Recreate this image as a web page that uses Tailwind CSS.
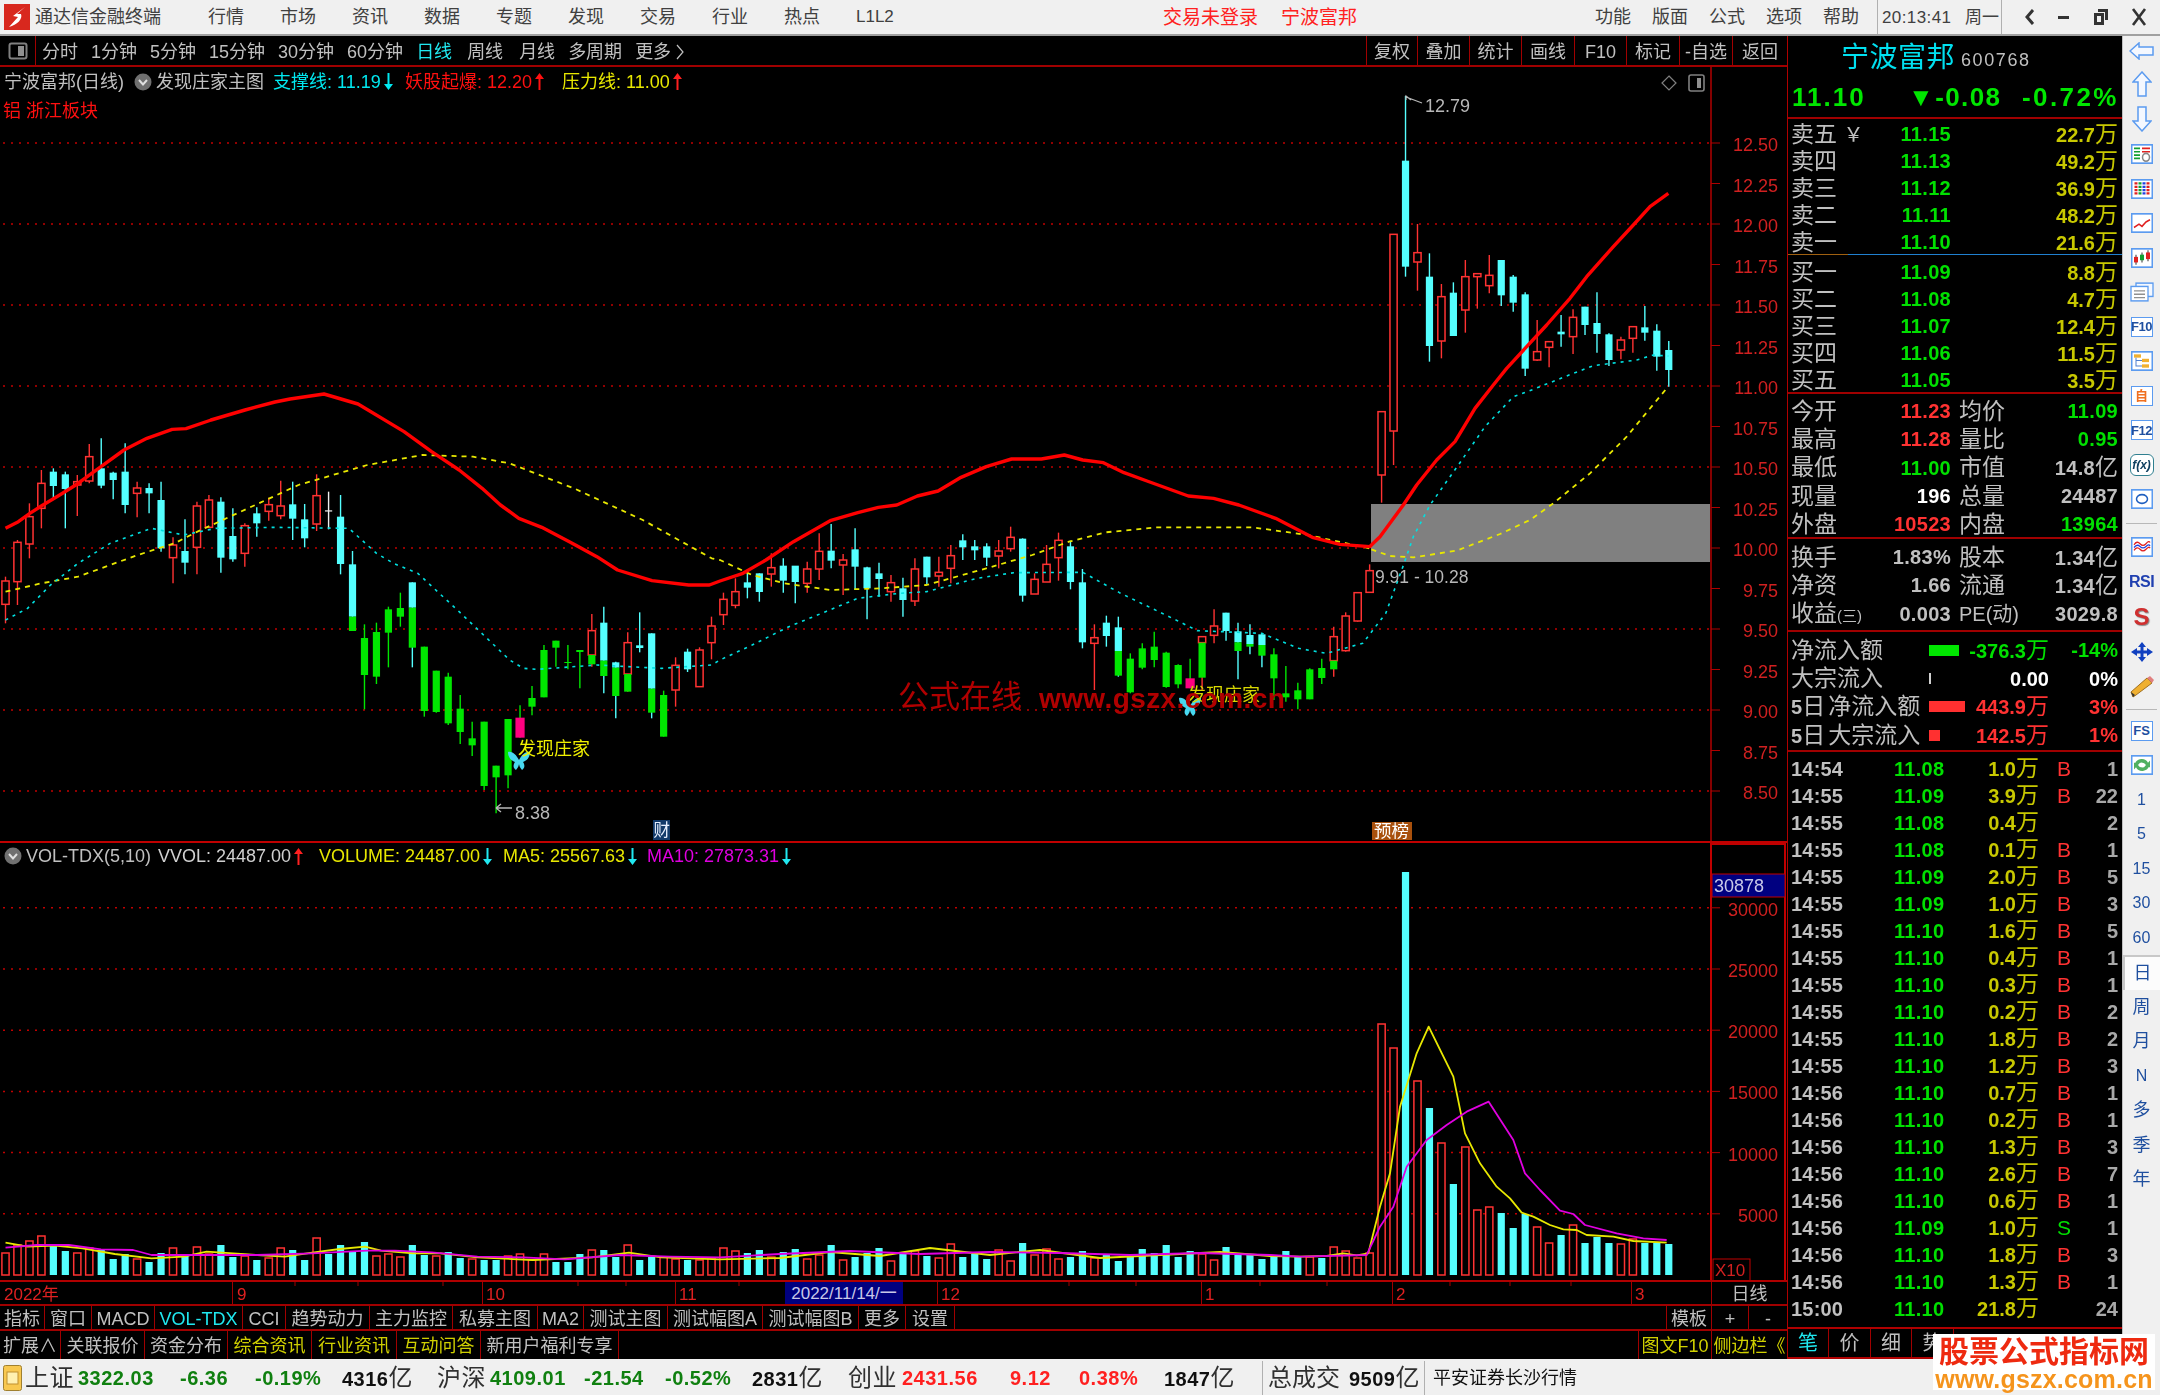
<!DOCTYPE html>
<html lang="zh-CN">
<head>
  <meta charset="UTF-8">
  <title>通达信金融终端</title>
  <script src="https://cdn.jsdelivr.net/npm/@tailwindcss/browser@4"></script>
</head>
<body class="bg-black">
<svg width="0" height="0" class="absolute">
  <defs>
    <path id="up" d="M4.5 0 L9 6 H5.5 V17 H3.5 V6 H0 Z" fill="currentColor"/>
    <path id="down" d="M4.5 17 L9 11 H5.5 V0 H3.5 V11 H0 Z" fill="currentColor"/>
    <path id="fly" d="M-11 -8 C-6 -9 -3 -5 0 0 C3 -5 6 -9 11 -8 C11 -2 7 1 4 2 C6 5 6 8 3 10 C1 8 0 5 0 4 C0 5 -1 8 -3 10 C-6 8 -6 5 -4 2 C-7 1 -11 -2 -11 -8 Z"/>
  </defs>
</svg>
<div class="relative w-[2160px] h-[1395px] flex flex-col overflow-hidden blur-[0.35px] font-['Liberation_Sans','Noto_Sans_CJK_SC',sans-serif] text-[18px] leading-none text-[#c0c0c0]">

  <!-- Title bar -->
  <div class="h-[36px] shrink-0 bg-[#f0f0f0] border-b-2 border-[#a0a0a0] flex items-center text-[#404040]">
    <svg width="26" height="26" viewBox="0 0 26 26" class="ml-[4px] shrink-0"><rect width="26" height="26" fill="#d8281e"/><path d="M21 3 L9 12 L14 13 L5 23 C13 21 19 15 17 10 L13 10 Z" fill="#fff"/></svg>
    <span class="ml-[5px] w-[173px]">通达信金融终端</span>
    <div class="flex gap-[36px]"><span>行情</span><span>市场</span><span>资讯</span><span>数据</span><span>专题</span><span>发现</span><span>交易</span><span>行业</span><span>热点</span><span class="w-[37px] text-[17px]">L1L2</span></div>
    <span class="ml-[270px] text-[19px] text-[#ff2020] w-[118px]">交易未登录</span>
    <span class="text-[19px] text-[#ff2020]">宁波富邦</span>
    <div class="ml-[238px] flex gap-[21px]"><span>功能</span><span>版面</span><span>公式</span><span>选项</span><span>帮助</span></div>
    <div class="ml-[18px] w-[125px] h-[34px] border-x border-[#b0b0b0] flex items-center pl-[4px] text-[17px]"><span class="w-[83px] tracking-[0.4px]">20:13:41</span><span>周一</span></div>
    <div class="flex-1 flex items-center justify-around pl-[10px] pr-[2px]">
      <svg width="14" height="20" viewBox="0 0 14 20"><path d="M10 3 L4 10 L10 17" fill="none" stroke="#333" stroke-width="3"/></svg>
      <svg width="14" height="20" viewBox="0 0 14 20"><rect x="1" y="9" width="11" height="3" fill="#333"/></svg>
      <svg width="18" height="20" viewBox="0 0 18 20"><path d="M6 2 H16 V13 H13 V5 H6 Z M2 6 H12 V18 H2 Z M5 9 V15 H9 V9 Z" fill="#333" fill-rule="evenodd"/></svg>
      <svg width="16" height="20" viewBox="0 0 16 20"><path d="M2 2 L14 18 M14 2 L2 18" stroke="#333" stroke-width="2.6"/></svg>
    </div>
  </div>

  <!-- Main area -->
  <div class="h-[1323px] shrink-0 flex">

    <!-- Left: chart column -->
    <div class="w-[1788px] shrink-0 flex flex-col border-r border-[#b00000]">

      <!-- Period toolbar -->
      <div class="h-[31px] shrink-0 flex items-center border-b-2 border-[#a00000]">
        <div class="w-[36px] h-full flex items-center justify-center border-r border-[#a00000]">
          <svg width="20" height="18" viewBox="0 0 20 18"><rect x="1.5" y="1.5" width="17" height="15" rx="2" fill="none" stroke="#808080" stroke-width="2"/><rect x="10" y="4" width="6" height="10" fill="#909090"/></svg>
        </div>
        <div class="ml-[6px] pt-[2px] flex items-center gap-[13px]"><span>分时</span><span>1分钟</span><span>5分钟</span><span>15分钟</span><span>30分钟</span><span>60分钟</span><span class="text-[#20e8f0]">日线</span><span class="ml-[2px]">周线</span><span class="ml-[3px]">月线</span><span>多周期</span><span class="flex items-center gap-[5px]">更多<svg width="8" height="16" viewBox="0 0 8 16"><path d="M1 1 L7 8 L1 15" fill="none" stroke="#c0c0c0" stroke-width="1.2"/></svg></span></div>
        <div class="ml-auto flex h-full">
          <span class="w-[51px] pt-[2px] flex items-center justify-center border-l border-[#a00000]">复权</span>
          <span class="w-[52px] pt-[2px] flex items-center justify-center border-l border-[#a00000]">叠加</span>
          <span class="w-[52px] pt-[2px] flex items-center justify-center border-l border-[#a00000]">统计</span>
          <span class="w-[53px] pt-[2px] flex items-center justify-center border-l border-[#a00000]">画线</span>
          <span class="w-[52px] pt-[2px] flex items-center justify-center border-l border-[#a00000]">F10</span>
          <span class="w-[53px] pt-[2px] flex items-center justify-center border-l border-[#a00000]">标记</span>
          <span class="w-[53px] pt-[2px] flex items-center justify-center border-l border-[#a00000]">-自选</span>
          <span class="w-[55px] pt-[2px] flex items-center justify-center border-l border-[#a00000]">返回</span>
        </div>
      </div>

      <!-- Price chart -->
      <div class="relative h-[776px] shrink-0 border-b-2 border-[#c00000]">
        <svg id="price" class="absolute left-0 top-0" width="1787" height="774" viewBox="0 67 1787 774">
          <g id="pGrid"></g>
          <rect x="1371" y="504" width="339" height="58" fill="#808080"/>
          <g id="pBars"></g>
          <g id="pLines"></g>
          <line x1="1711" y1="67" x2="1711" y2="841" stroke="#b00000" stroke-width="1.5"/>
          <g id="pAxis" fill="#d02020" font-size="18"></g>
          <g fill="#b8b8b8" font-size="18">
            <path d="M1406 100 V96 L1411 100 M1406 97 L1422 103" fill="none" stroke="#b8b8b8" stroke-width="1.2"/>
            <text x="1425" y="112">12.79</text>
            <path d="M496 808 L501 804 M496 808 L501 812 M496 808 H512" fill="none" stroke="#b8b8b8" stroke-width="1.4"/>
            <text x="515" y="819">8.38</text>
            <text x="1375" y="583" font-size="17.5">9.91 - 10.28</text>
          </g>
          <use href="#fly" fill="#48d8f0" x="519" y="760"/>
          <use href="#fly" fill="#48d8f0" x="1190" y="706"/>
          <text x="518" y="755" fill="#f0f000" font-size="18">发现庄家</text>
          <text x="1188" y="701" fill="#d8d800" font-size="18">发现庄家</text>
          <text x="898" y="707" fill="#b00000" font-size="31">公式在线</text>
          <text x="1039" y="708" fill="#b00000" font-size="28" font-weight="bold" letter-spacing="0.4">www.gszx.com.cn</text>
          <rect x="653" y="820" width="17" height="20" fill="#123a6a"/>
          <text x="653.5" y="836" fill="#e8f0ff" font-size="16.5">财</text>
          <rect x="1372" y="822" width="40" height="18" fill="#a8500c"/>
          <text x="1374" y="837" fill="#fff" font-size="17.5">预榜</text>
          <path d="M1669 76 L1676 83 L1669 90 L1662 83 Z" fill="none" stroke="#808080" stroke-width="1.2"/>
          <rect x="1689" y="75" width="15" height="16" rx="2" fill="none" stroke="#808080" stroke-width="1.6"/>
          <rect x="1697" y="78" width="4" height="10" fill="#909090"/>
        </svg>
        <div class="absolute left-0 top-0 w-[1700px]">
          <div class="h-[29px] flex items-center pl-[4px]">
            <span class="w-[130px]">宁波富邦(日线)</span>
            <span class="w-[22px]"><svg width="18" height="18" viewBox="0 0 18 18"><circle cx="9" cy="9" r="8.5" fill="#707070"/><path d="M5 7 L9 11.5 L13 7" fill="none" stroke="#e0e0e0" stroke-width="2"/></svg></span>
            <span class="w-[117px]">发现庄家主图</span>
            <span class="w-[132px] text-[#00e8f0] flex items-center">支撑线: 11.19<svg width="9" height="17" viewBox="0 0 9 17" class="ml-[3px]"><use href="#down"/></svg></span>
            <span class="w-[157px] text-[#ff1010] flex items-center">妖股起爆: 12.20<svg width="9" height="17" viewBox="0 0 9 17" class="ml-[3px]"><use href="#up"/></svg></span>
            <span class="text-[#e8e800] flex items-center">压力线: 11.00<svg width="9" height="17" viewBox="0 0 9 17" class="ml-[3px] text-[#ff2020]"><use href="#up"/></svg></span>
          </div>
          <div class="pl-[3px] mt-[6px] text-[#ff1010]">铝 浙江板块</div>
        </div>
      </div>

      <!-- Volume chart -->
      <div class="relative h-[439px] shrink-0 border-b-2 border-[#b00000]">
        <svg class="absolute left-0 top-0" width="1787" height="437" viewBox="0 843 1787 437">
          <g id="vGrid"></g>
          <g id="vBars"></g>
          <g id="vLines"></g>
          <path d="M1711 843 V1281 M1785 843 V1281 M1711 844 H1785" fill="none" stroke="#c00000" stroke-width="2"/>
          <rect x="1712" y="874" width="73" height="23" fill="#000080" stroke="#c00000"/>
          <text x="1714" y="892" fill="#c8c8e8" font-size="18">30878</text>
          <g id="vAxis" fill="#d02020" font-size="18"></g>
          <rect x="1713" y="1259" width="37" height="22" fill="none" stroke="#c00000"/>
          <text x="1715" y="1276" fill="#d02020" font-size="17">X10</text>
        </svg>
        <div class="absolute left-0 top-0 h-[26px] flex items-center pl-[4px]">
          <span class="w-[22px]"><svg width="18" height="18" viewBox="0 0 18 18"><circle cx="9" cy="9" r="8.5" fill="#707070"/><path d="M5 7 L9 11.5 L13 7" fill="none" stroke="#e0e0e0" stroke-width="2"/></svg></span>
          <span class="w-[132px]">VOL-TDX(5,10)</span>
          <span class="w-[161px] text-[#d0d0d0] flex items-center">VVOL: 24487.00<svg width="9" height="17" viewBox="0 0 9 17" class="ml-[3px] text-[#ff2020]"><use href="#up"/></svg></span>
          <span class="w-[184px] text-[#e8e800] flex items-center">VOLUME: 24487.00<svg width="9" height="17" viewBox="0 0 9 17" class="ml-[3px] text-[#20e8f0]"><use href="#down"/></svg></span>
          <span class="w-[144px] text-[#e8e800] flex items-center">MA5: 25567.63<svg width="9" height="17" viewBox="0 0 9 17" class="ml-[3px] text-[#20e8f0]"><use href="#down"/></svg></span>
          <span class="text-[#e000e0] flex items-center">MA10: 27873.31<svg width="9" height="17" viewBox="0 0 9 17" class="ml-[3px] text-[#20e8f0]"><use href="#down"/></svg></span>
        </div>
      </div>

      <!-- Date axis -->
      <div class="relative h-[24px] shrink-0 flex text-[#e02020] text-[17px] border-b-2 border-[#a00000]">
        <span class="w-[232px] pl-[4px] pt-[2px] flex items-center">2022年</span>
        <span class="w-[250px] pl-[4px] pt-[2px] flex items-center border-l border-[#a00000]">9</span>
        <span class="w-[193px] pl-[3px] pt-[2px] flex items-center border-l border-[#a00000]">10</span>
        <span class="w-[262px] pl-[3px] pt-[2px] flex items-center border-l border-[#a00000]">11</span>
        <span class="w-[264px] pl-[3px] pt-[2px] flex items-center border-l border-[#a00000]">12</span>
        <span class="w-[191px] pl-[3px] pt-[2px] flex items-center border-l border-[#a00000]">1</span>
        <span class="w-[239px] pl-[3px] pt-[2px] flex items-center border-l border-[#a00000]">2</span>
        <span class="w-[80px] pl-[3px] pt-[2px] flex items-center border-l border-[#a00000]">3</span>
        <span class="flex-1 pt-[2px] flex items-center justify-center border-l border-[#a00000] text-[#c0c0c0] text-[18px]">日线</span>
        <span class="absolute left-[785px] top-0 w-[118px] h-[22px] pt-[1px] bg-[#000080] flex items-center justify-center text-[#c8c8e8]">2022/11/14/一</span>
        <svg class="absolute left-0 top-0" width="1711" height="4"><path d="M295 0V4 M358 0V4 M443 0V4 M578 0V4 M626 0V4 M739 0V4 M1069 0V4 M1136 0V4 M1260 0V4 M1327 0V4 M1450 0V4 M1510 0V4 M1571 0V4" stroke="#a00000"/></svg>
      </div>

      <!-- Indicator tabs -->
      <div class="h-[25px] shrink-0 flex items-stretch border-b-2 border-[#a00000]">
        <span class="w-[45px] pt-[2px] flex items-center justify-center border-r border-[#a00000]">指标</span>
        <span class="w-[47px] pt-[2px] flex items-center justify-center border-r border-[#a00000]">窗口</span>
        <span class="w-[63px] pt-[2px] flex items-center justify-center border-r border-[#a00000]">MACD</span>
        <span class="w-[88px] pt-[2px] flex items-center justify-center border-r border-[#a00000] text-[#20e8f0]">VOL-TDX</span>
        <span class="w-[43px] pt-[2px] flex items-center justify-center border-r border-[#a00000]">CCI</span>
        <span class="w-[84px] pt-[2px] flex items-center justify-center border-r border-[#a00000]">趋势动力</span>
        <span class="w-[83px] pt-[2px] flex items-center justify-center border-r border-[#a00000]">主力监控</span>
        <span class="w-[85px] pt-[2px] flex items-center justify-center border-r border-[#a00000]">私募主图</span>
        <span class="w-[46px] pt-[2px] flex items-center justify-center border-r border-[#a00000]">MA2</span>
        <span class="w-[84px] pt-[2px] flex items-center justify-center border-r border-[#a00000]">测试主图</span>
        <span class="w-[95px] pt-[2px] flex items-center justify-center border-r border-[#a00000]">测试幅图A</span>
        <span class="w-[96px] pt-[2px] flex items-center justify-center border-r border-[#a00000]">测试幅图B</span>
        <span class="w-[47px] pt-[2px] flex items-center justify-center border-r border-[#a00000]">更多</span>
        <span class="w-[49px] pt-[2px] flex items-center justify-center border-r border-[#a00000]">设置</span>
        <span class="ml-auto w-[45px] pt-[2px] flex items-center justify-center border-l border-[#a00000]">模板</span>
        <span class="w-[37px] pt-[2px] flex items-center justify-center border-l border-[#a00000]">+</span>
        <span class="w-[39px] pt-[2px] flex items-center justify-center border-l border-[#a00000]">-</span>
      </div>

      <!-- Info tabs -->
      <div class="flex-1 flex items-stretch">
        <span class="w-[61px] pt-[2px] flex items-center justify-center border-r border-[#a00000]">扩展∧</span>
        <span class="w-[84px] pt-[2px] flex items-center justify-center border-r border-[#a00000]">关联报价</span>
        <span class="w-[83px] pt-[2px] flex items-center justify-center border-r border-[#a00000]">资金分布</span>
        <span class="w-[84px] pt-[2px] flex items-center justify-center border-r border-[#a00000] text-[#d0d000]">综合资讯</span>
        <span class="w-[85px] pt-[2px] flex items-center justify-center border-r border-[#a00000] text-[#d0d000]">行业资讯</span>
        <span class="w-[84px] pt-[2px] flex items-center justify-center border-r border-[#a00000] text-[#d0d000]">互动问答</span>
        <span class="w-[138px] pt-[2px] flex items-center justify-center border-r border-[#a00000]">新用户福利专享</span>
        <span class="ml-auto w-[73px] pt-[2px] flex items-center justify-center border-l border-[#a00000] text-[#d0d000]">图文F10</span>
        <span class="w-[76px] pt-[2px] flex items-center justify-center border-l border-[#a00000] text-[#d0d000]">侧边栏《</span>
      </div>
    </div>

    <!-- Quote panel -->
    <div class="w-[334px] shrink-0 flex flex-col">
      <div class="h-[83px] shrink-0 border-b-2 border-[#a00000] relative">
        <div class="h-[38px] flex items-center pl-[53px]">
          <span class="text-[28px] text-[#00e0f0] font-['Noto_Sans_CJK_SC'] w-[120px] tracking-[0.5px]">宁波富邦</span>
          <span class="text-[18px] tracking-[1.6px] mt-[10px]">600768</span>
        </div>
        <div class="flex items-center pl-[4px] text-[#00e600] font-bold text-[26px] tracking-[2px] mt-[10px]">
          <span class="w-[116px]">11.10</span>
          <span class="w-[114px] tracking-[1.4px]">▼-0.08</span>
          <span class="tracking-[2.4px]">-0.72%</span>
        </div>
      </div>
      <div id="asks" class="h-[135px] pt-[1.5px] shrink-0"></div>
      <div class="h-[1px] shrink-0 bg-[linear-gradient(to_right,#a06010_60px,#2080d0_60px)]"></div>
      <div id="bids" class="h-[139px] pt-[3.5px] shrink-0 border-b-2 border-[#a00000]"></div>
      <div id="stats" class="h-[145px] shrink-0 pt-[3px] border-b-2 border-[#a00000]"></div>
      <div id="stats2" class="h-[93px] shrink-0 pt-[4px] border-b-2 border-[#a00000]"></div>
      <div class="h-[120px] shrink-0 pt-[4px] border-b-2 border-[#a00000] text-[20px] font-bold">
        <div class="h-[28.4px] flex items-center pl-[3px] pr-[4px]"><span class="w-[138px] text-[23px] font-normal text-[#c0c0c0]">净流入额</span><span class="w-[30px] h-[11px] bg-[#00e600]"></span><span class="w-[90px] text-right text-[#00e000]">-376.3<span class="text-[23px] font-normal">万</span></span><span class="flex-1 text-right text-[#00e000]">-14%</span></div>
        <div class="h-[28.4px] flex items-center pl-[3px] pr-[4px]"><span class="w-[138px] text-[23px] font-normal text-[#c0c0c0]">大宗流入</span><span class="w-[30px] h-[11px] flex"><span class="w-[1.5px] bg-[#d0d0d0]"></span></span><span class="w-[90px] text-right text-white">0.00</span><span class="flex-1 text-right text-white">0%</span></div>
        <div class="h-[28.4px] flex items-center pl-[3px] pr-[4px]"><span class="w-[138px] text-[#c0c0c0] whitespace-nowrap"><span class="font-normal text-[23px]"><span class="font-bold text-[20px]">5</span>日</span><span class="ml-[3px] text-[23px] font-normal">净流入额</span></span><span class="w-[30px] flex"><span class="w-[36px] shrink-0 h-[11px] bg-[#ff3030]"></span></span><span class="w-[90px] text-right text-[#ff3232]">443.9<span class="text-[23px] font-normal">万</span></span><span class="flex-1 text-right text-[#ff3232]">3%</span></div>
        <div class="h-[28.4px] flex items-center pl-[3px] pr-[4px]"><span class="w-[138px] text-[#c0c0c0] whitespace-nowrap"><span class="font-normal text-[23px]"><span class="font-bold text-[20px]">5</span>日</span><span class="ml-[3px] text-[23px] font-normal">大宗流入</span></span><span class="w-[30px] flex"><span class="w-[11px] h-[11px] bg-[#ff3030]"></span></span><span class="w-[90px] text-right text-[#ff3232]">142.5<span class="text-[23px] font-normal">万</span></span><span class="flex-1 text-right text-[#ff3232]">1%</span></div>
      </div>
      <div id="trades" class="h-[577px] shrink-0 pt-[3px] border-b-2 border-[#b00000] text-[20px] font-bold"></div>
      <div class="flex-1 flex items-stretch border-b-2 border-[#b00000]">
        <span class="w-[41px] flex items-center justify-center border-r border-[#a00000] text-[20px] text-[#20e8f0]">笔</span>
        <span class="w-[42px] flex items-center justify-center border-r border-[#a00000] text-[20px]">价</span>
        <span class="w-[41px] flex items-center justify-center border-r border-[#a00000] text-[20px]">细</span>
        <span class="w-[42px] flex items-center justify-center border-r border-[#a00000] text-[20px]">势</span>
      </div>
    </div>

    <!-- Side toolbar -->
    <div class="flex-1 bg-[#f0f0f0] border-l border-[#c0c0c0] flex flex-col items-stretch text-[#1f4f9f]">
      <div class="h-[30px] flex items-center justify-center"><svg width="26" height="18" viewBox="0 0 26 18"><path d="M1 9 L10 1 V5 H24 V13 H10 V17 Z" fill="#f4f8ff" stroke="#5b9bf0" stroke-width="1.5"/></svg></div>
      <div class="h-[35px] flex items-center justify-center"><svg width="20" height="26" viewBox="0 0 20 26"><path d="M10 1 L19 11 H14 V25 H6 V11 H1 Z" fill="#f4f8ff" stroke="#5b9bf0" stroke-width="1.5"/></svg></div>
      <div class="h-[36px] flex items-center justify-center"><svg width="20" height="26" viewBox="0 0 20 26"><path d="M10 25 L19 15 H14 V1 H6 V15 H1 Z" fill="#f4f8ff" stroke="#5b9bf0" stroke-width="1.5"/></svg></div>
      <div class="h-[34.5px] flex items-center justify-center"><svg width="22" height="20" viewBox="0 0 22 18" preserveAspectRatio="none"><rect x=".75" y=".75" width="20.5" height="16.5" fill="#fff" stroke="#5b9bf0" stroke-width="1.5"/><path d="M3 4 H9 M3 7 H9 M3 10 H9 M3 13 H9" stroke="#10a030" stroke-width="1.5"/><path d="M11 4 H19 M11 7 H19" stroke="#e02020" stroke-width="1.5"/><circle cx="15" cy="12" r="3.5" fill="none" stroke="#888" stroke-width="1.5"/></svg></div>
      <div class="h-[34.5px] flex items-center justify-center"><svg width="22" height="20" viewBox="0 0 22 18" preserveAspectRatio="none"><rect x=".75" y=".75" width="20.5" height="16.5" fill="#fff" stroke="#5b9bf0" stroke-width="1.5"/><path d="M5 3 V15" stroke="#e02020" stroke-width="3" stroke-dasharray="2 1"/><path d="M9 3 V15" stroke="#10a030" stroke-width="3" stroke-dasharray="2 1"/><path d="M13 3 V15" stroke="#2040e0" stroke-width="3" stroke-dasharray="2 1"/><path d="M17 3 V15" stroke="#e02020" stroke-width="3" stroke-dasharray="2 1"/></svg></div>
      <div class="h-[34.5px] flex items-center justify-center"><svg width="22" height="20" viewBox="0 0 22 18" preserveAspectRatio="none"><rect x=".75" y=".75" width="20.5" height="16.5" fill="#fff" stroke="#5b9bf0" stroke-width="1.5"/><path d="M3 13 L8 10 L11 12 L15 8 L19 6" fill="none" stroke="#e02020" stroke-width="1.5"/></svg></div>
      <div class="h-[34.5px] flex items-center justify-center"><svg width="22" height="20" viewBox="0 0 22 18" preserveAspectRatio="none"><rect x=".75" y=".75" width="20.5" height="16.5" fill="#fff" stroke="#5b9bf0" stroke-width="1.5"/><path d="M5 6 V15 M11 4 V13 M17 2 V12" stroke="#333" stroke-width="1"/><rect x="3" y="8" width="4" height="5" fill="#e02020"/><rect x="9" y="6" width="4" height="5" fill="#10a030"/><rect x="15" y="4" width="4" height="6" fill="#e02020"/></svg></div>
      <div class="h-[34.5px] flex items-center justify-center"><svg width="24" height="20" viewBox="0 0 24 18" preserveAspectRatio="none"><rect x="6" y="1" width="17" height="12" fill="#f4f8ff" stroke="#5b9bf0" stroke-width="1.3"/><rect x="1" y="4" width="17" height="13" fill="#fff" stroke="#5b9bf0" stroke-width="1.3"/><path d="M4 8 H15 M4 11 H15 M4 14 H15" stroke="#909090" stroke-width="1.2"/></svg></div>
      <div class="h-[34.5px] flex items-center justify-center"><span class="w-[22px] h-[20px] bg-white border-[1.5px] border-[#5b9bf0] flex items-center justify-center text-[13px] tracking-[-0.5px] text-[#1f4f9f] font-bold">F10</span></div>
      <div class="h-[34.5px] flex items-center justify-center"><svg width="22" height="20" viewBox="0 0 22 18" preserveAspectRatio="none"><rect x=".75" y=".75" width="20.5" height="16.5" fill="#fff" stroke="#5b9bf0" stroke-width="1.5"/><rect x="3" y="3" width="7" height="3" fill="#f0b030"/><rect x="11" y="7" width="7" height="3" fill="#f0b030"/><rect x="11" y="12" width="7" height="3" fill="#f0b030"/><path d="M5 6 V13.5 H11 M5 8.5 H11" fill="none" stroke="#5080d0"/></svg></div>
      <div class="h-[34.5px] flex items-center justify-center"><span class="w-[22px] h-[20px] bg-white border-[1.5px] border-[#5b9bf0] flex items-center justify-center text-[13px] text-[#f07020] font-bold">自</span></div>
      <div class="h-[34.5px] flex items-center justify-center"><span class="w-[22px] h-[20px] bg-white border-[1.5px] border-[#5b9bf0] flex items-center justify-center text-[13px] tracking-[-0.5px] text-[#1f4f9f] font-bold">F12</span></div>
      <div class="h-[34.5px] flex items-center justify-center"><span class="w-[24px] h-[22px] bg-white border-[1.5px] border-[#308090] rounded-[6px] flex items-center justify-center text-[12px] italic text-[#104060] font-bold">f(x)</span></div>
      <div class="h-[34.5px] flex items-center justify-center"><svg width="22" height="20" viewBox="0 0 22 18" preserveAspectRatio="none"><rect x=".75" y=".75" width="20.5" height="16.5" fill="#fff" stroke="#5b9bf0" stroke-width="1.5"/><ellipse cx="11" cy="9" rx="5.5" ry="4" fill="none" stroke="#2060c0" stroke-width="1.5"/></svg></div>
      <div class="h-[13px] flex items-center px-[3px]"><div class="h-[1px] w-full bg-[#b8b8b8]"></div></div>
      <div class="h-[35px] flex items-center justify-center"><svg width="22" height="20" viewBox="0 0 22 18" preserveAspectRatio="none"><rect x=".75" y=".75" width="20.5" height="16.5" fill="#fff" stroke="#5b9bf0" stroke-width="1.5"/><path d="M3 7 Q6 3 9 6 T15 6 T19 5 M3 12 Q6 8 9 11 T15 11 T19 10" fill="none" stroke="#e02020" stroke-width="1.2"/><path d="M3 9.5 Q6 6 9 8.5 T15 8.5 T19 8" fill="none" stroke="#2040e0" stroke-width="1.2"/></svg></div>
      <div class="h-[35px] flex items-center justify-center text-[16px] font-bold text-[#2040b0] tracking-[-0.5px]">RSI</div>
      <div class="h-[35px] flex items-center justify-center text-[24px] font-bold text-[#d03030] [text-shadow:1px_1px_1px_#888]">S</div>
      <div class="h-[35px] flex items-center justify-center"><svg width="22" height="20" viewBox="0 0 22 20"><path d="M11 0 L15 5 H12.5 V8.5 H16 V6 L22 10 L16 14 V11.5 H12.5 V15 H15 L11 20 L7 15 H9.5 V11.5 H6 V14 L0 10 L6 6 V8.5 H9.5 V5 H7 Z" fill="#1040c0"/></svg></div>
      <div class="h-[35px] flex items-center justify-center"><svg width="24" height="22" viewBox="0 0 24 22"><path d="M3 21 L1 16 L17 2 L22 7 L6 19 Z" fill="#f0b030" stroke="#a07020"/><path d="M17 2 L22 7 L24 4 L20 0 Z" fill="#e08080"/><path d="M3 21 L1 16 L5 19 Z" fill="#333"/></svg></div>
      <div class="h-[9px] flex items-center px-[3px]"><div class="h-[1px] w-full bg-[#b8b8b8]"></div></div>
      <div class="h-[34.5px] flex items-center justify-center"><span class="w-[22px] h-[20px] bg-white border-[1.5px] border-[#5b9bf0] flex items-center justify-center text-[13px] text-[#1f4f9f] font-bold">FS</span></div>
      <div class="h-[34.5px] flex items-center justify-center"><svg width="22" height="20" viewBox="0 0 22 18" preserveAspectRatio="none"><rect x=".75" y=".75" width="20.5" height="16.5" fill="#fff" stroke="#5b9bf0" stroke-width="1.5"/><path d="M4 8 A7 6 0 0 1 17 7 L19 5 V11 H13 L15 9 A5 4 0 0 0 6 9 Z M18 10 A7 6 0 0 1 5 11 L3 13 V7 H9 L7 9 A5 4 0 0 0 16 9 Z" fill="#50b060"/></svg></div>
      <div class="h-[34.5px] flex items-center justify-center text-[16px]">1</div>
      <div class="h-[34.5px] flex items-center justify-center text-[16px]">5</div>
      <div class="h-[34.5px] flex items-center justify-center text-[16px]">15</div>
      <div class="h-[34.5px] flex items-center justify-center text-[16px]">30</div>
      <div class="h-[34.5px] flex items-center justify-center text-[16px]">60</div>
      <div class="h-[34.5px] flex items-center justify-center bg-[#fcfcfc] border-t-2 border-l-2 border-[#c8c8c8]">日</div>
      <div class="h-[34.5px] flex items-center justify-center">周</div>
      <div class="h-[34.5px] flex items-center justify-center">月</div>
      <div class="h-[34.5px] flex items-center justify-center text-[16px]">N</div>
      <div class="h-[34.5px] flex items-center justify-center">多</div>
      <div class="h-[34.5px] flex items-center justify-center">季</div>
      <div class="h-[34.5px] flex items-center justify-center">年</div>
    </div>
  </div>

  <!-- Status bar -->
  <div class="flex-1 pt-[2px] bg-[#f0f0f0] flex items-center text-[#101010] text-[20px] tracking-[0.5px]">
    <span class="w-[25px] pl-[3px]"><svg width="19" height="26" viewBox="0 0 19 26"><rect x=".5" y=".5" width="18" height="25" rx="2" fill="#f8c850" stroke="#a08030"/><rect x="4" y="7" width="11" height="12" fill="#fff0b0" stroke="#c09030"/></svg></span>
    <span class="w-[53px] text-[24px] text-[#303030]">上证</span>
    <span class="w-[102px] font-bold text-[#108010]">3322.03</span>
    <span class="w-[75px] font-bold text-[#108010]">-6.36</span>
    <span class="w-[87px] font-bold text-[#108010]">-0.19%</span>
    <span class="w-[95px] font-bold">4316<span class="text-[24px] font-normal text-[#303030]">亿</span></span>
    <span class="w-[53px] text-[24px] text-[#303030]">沪深</span>
    <span class="w-[94px] font-bold text-[#108010]">4109.01</span>
    <span class="w-[81px] font-bold text-[#108010]">-21.54</span>
    <span class="w-[87px] font-bold text-[#108010]">-0.52%</span>
    <span class="w-[96px] font-bold">2831<span class="text-[24px] font-normal text-[#303030]">亿</span></span>
    <span class="w-[54px] text-[24px] text-[#303030]">创业</span>
    <span class="w-[108px] font-bold text-[#ff2020]">2431.56</span>
    <span class="w-[69px] font-bold text-[#ff2020]">9.12</span>
    <span class="w-[85px] font-bold text-[#ff2020]">0.38%</span>
    <span class="w-[98px] font-bold">1847<span class="text-[24px] font-normal text-[#303030]">亿</span></span>
    <span class="w-[87px] h-[34px] border-l border-[#b0b0b0] pl-[5px] flex items-center text-[24px] text-[#303030] tracking-normal">总成交</span>
    <span class="w-[75px] font-bold">9509<span class="text-[24px] font-normal text-[#303030]">亿</span></span>
    <span class="h-[34px] border-l border-[#b0b0b0] pl-[8px] flex items-center text-[18px] tracking-normal">平安证券长沙行情</span>
  </div>

  <!-- Corner watermark -->
  <div class="absolute left-[1933px] top-[1334px] w-[222px] h-[56px] pt-[2px] bg-white flex flex-col items-center justify-start font-bold">
    <span class="text-[30px] text-[#ee2a10] leading-[32px]">股票公式指标网</span>
    <span class="text-[25px] text-[#f5941d] leading-[22px] tracking-[0.2px]">www.gszx.com.cn</span>
  </div>
</div>

<script>
  const NS = 'http://www.w3.org/2000/svg';
  const RED = '#ff3232', CYAN = '#54ffff', GREEN = '#00e600', PINK = '#ff0080';
  const X = i => 5.5 + 11.966 * i;
  const Y7 = v => 420 + v / 3;
  const Y9 = v => 80 + v / 3;

  function add(id, tag, attrs, text) {
    const el = document.createElementNS(NS, tag);
    for (const k in attrs) el.setAttribute(k, attrs[k]);
    if (text) el.textContent = text;
    document.getElementById(id).appendChild(el);
  }
  function line(id, pts, color, width, dash) {
    add(id, 'polyline', { points: pts.map(p => p.join(',')).join(' '), fill: 'none', stroke: color, 'stroke-width': width, 'stroke-dasharray': dash || 'none', 'stroke-linejoin': 'round' });
  }

  // [type, wick top, body top, body bottom, wick bottom, split]
  const early = [
    ['r',470,483,553,610],['r',360,367,485,555],['r',250,290,372,415],['r',150,190,265,325],['c',145,155,198,235],
    ['c',155,163,207,325],['r',165,185,195,288],['r',72,110,183,190],['c',55,145,197,205],['c',155,158,180,238],
    ['c',70,155,255,280],['r',185,204,220,292],['c',190,204,220,280],['c',185,240,385,395],['r',352,375,413,490],
    ['c',298,393,428,463],['r',245,258,382,463],['r',225,240,322,325],['c',232,245,413,458],['c',265,348,418,425],
    ['r',310,317,400,440],['c',262,280,310,350],['r',233,254,274,302],['r',182,258,287,298],['c',185,253,296,360],
    ['c',252,298,355,382],['r',163,227,312,333],['w',215,271,273,328],['c',225,290,432,463],['m',393,433,633,633,590],
    ['g',613,654,765,868],['g',608,636,770,792],['g',560,568,638,742],['g',518,564,590,620],['m',487,487,683,742,563],
    ['g',680,680,873,890],['g',752,752,876,878],['g',758,770,910,915],['g',825,866,936,972],['g',905,955,976,1008],
    ['g',905,905,1098,1110],['g',1037,1037,1072,1180],['g',897,897,1066,1105],['p',856,893,953,953],['g',798,834,860,886],
    ['g',675,690,832,832],['g',662,662,683,740],['g',675,726,729,748],['g',690,690,696,805],['n',582,632,733,740,705],
    ['m',560,608,768,820,722],['m',725,727,828,895,743],['n',637,668,815,815,762],['c',577,676,684,697],['m',640,640,878,895,806],
    ['g',812,825,950,950],['r',712,736,810,860],['c',686,695,748,756],['r',682,690,800,800],['r',590,618,668,718],
    ['r',518,538,584,615],['r',475,515,556,565],['c',455,487,503,535],['c',460,460,516,545],['r',400,443,462,500],
    ['c',415,437,482,518],['c',438,437,486,550],['r',425,447,490,518],['r',340,394,447,480],['c',312,392,422,445],
    ['r',402,420,435,525],['c',325,388,440,510],['c',440,442,505,598],['c',428,460,477,530],['r',465,488,515,545],
    ['c',473,505,540,590],['r',415,447,543,558],['c',410,410,472,492],['r',410,457,468,500],['r',375,407,445,490],
    ['c',343,361,382,420],['c',360,379,391,420],['c',370,379,413,438],['r',360,393,408,445],['r',320,352,386,395],
    ['c',355,356,527,545],['r',460,478,522,522],['r',375,433,486,486],['r',338,361,413,482],['c',362,379,486,508],
    ['c',447,487,667,685],['r',613,653,670,810],['c',587,608,648,680],['m',590,622,767,770,693],['g',700,716,817,820],
    ['g',670,685,743,748],['g',635,680,720,742],['g',695,698,801,803],['g',733,735,793,805],['p',716,775,805,805],
    ['n',648,650,773,810,668],['r',568,618,646,670],['c',578,578,633,662],['m',608,634,693,778,667],['m',613,645,680,703,672],
    ['m',640,643,707,742,675],['g',685,703,775,840],['g',738,820,832,845],['g',788,811,838,868],['g',745,748,838,838],
    ['g',716,744,774,792],['n',620,650,748,770,722],['r',577,588,692,695],['r',517,518,603,605],['r',433,452,517,518]
  ];
  const late = [
    ['r',995,995,1185,1268],['r',463,463,1053,1155],['c',48,242,560,590],['r',432,518,546,632],['c',520,590,798,845],
    ['r',612,650,783,835],['c',607,638,768,768],['r',540,590,690,758],['r',580,581,590,686],['r',525,586,617,640],
    ['c',540,540,646,678],['c',585,590,668,695],['c',637,643,866,888],['r',720,815,840,843],['r',785,785,802,862],
    ['c',705,755,763,800],['r',688,712,770,822],['c',680,680,735,765],['c',637,729,762,818],['c',760,763,840,858],
    ['r',770,780,810,838],['r',738,740,775,818],['c',678,742,758,782],['c',733,752,830,872],['c',783,810,870,920]
  ];

  function candle(i, d, Y) {
    const [t, wt, bt, bb, wb, split] = d;
    const x = X(i), W = 7.2, L = x - W / 2;
    const wick = { r: RED, c: CYAN, g: GREEN, m: CYAN, n: RED, p: GREEN, w: '#f0f0f0' }[t];
    add('pBars', 'line', { x1: x, x2: x, y1: Y(wt), y2: Y(wb), stroke: wick, 'stroke-width': 1.4 });
    const top = Y(bt), bot = Y(bb);
    if (t === 'r') add('pBars', 'rect', { x: L, y: top, width: W, height: Math.max(bot - top, 1), fill: '#000', stroke: RED, 'stroke-width': 1.5 });
    if (t === 'c') add('pBars', 'rect', { x: L, y: top, width: W, height: bot - top, fill: CYAN });
    if (t === 'g') add('pBars', 'rect', { x: L, y: top, width: W, height: bot - top, fill: GREEN });
    if (t === 'p') add('pBars', 'rect', { x: L - 1, y: top, width: W + 2, height: bot - top, fill: PINK });
    if (t === 'w') add('pBars', 'rect', { x: L, y: top, width: W, height: 1.2, fill: '#f0f0f0' });
    if (t === 'm') {
      add('pBars', 'rect', { x: L, y: top, width: W, height: Y(split) - top, fill: CYAN });
      add('pBars', 'rect', { x: L, y: Y(split), width: W, height: bot - Y(split), fill: GREEN });
    }
    if (t === 'n') {
      add('pBars', 'rect', { x: L, y: top, width: W, height: Y(split) - top, fill: '#000', stroke: RED, 'stroke-width': 1.5 });
      add('pBars', 'rect', { x: L, y: Y(split), width: W, height: bot - Y(split), fill: GREEN });
    }
  }
  early.forEach((d, i) => candle(i, d, Y7));
  late.forEach((d, i) => candle(i + 115, d, Y9));

  // price chart lines, read from three crops
  const a7 = ([x, y]) => [x / 2.178, 420 + y / 3];
  const a8 = ([x, y]) => [720 + x / 2.178, 420 + y / 3];
  const a9 = ([x, y]) => [1300 + x / 3, 80 + y / 3];

  const redTop = [[324, 394], [290, 399], [275, 402], [245, 410], [211, 420]].reverse();
  const redLine = [
    ...[[12,325],[40,305],[65,280],[90,258],[130,225],[165,195],[190,170],[220,140],[270,90],[320,55],[375,28],[405,26],[460,0]].map(a7),
    ...redTop, [358, 404],
    ...[[880,35],[940,95],[1000,150],[1050,205],[1090,255],[1130,295],[1180,322],[1240,365],[1300,410],[1345,450],[1420,482],[1500,495],[1545,495]].map(a7),
    ...[[0,483],[50,460],[100,420],[160,365],[240,302],[300,278],[345,262],[385,255],[430,228],[475,213],[525,172],[580,140],[635,117],[700,117],[750,105],[790,120],[835,128],[880,158],[930,183],[1020,228],[1075,235],[1130,255],[1210,295],[1290,352],[1350,373],[1415,380]].map(a8),
    ...[[240,1370],[310,1275],[350,1215],[410,1140],[465,1085],[525,985],[580,915],[620,865],[680,800],[740,735],[810,655],[860,590],[940,500],[1000,435],[1050,380],[1105,340]].map(a9)
  ];
  const cyanLine = [
    ...[[12,600],[60,565],[110,495],[170,430],[240,370],[330,325],[400,345],[470,325],[600,322],[760,325],[820,400],[860,432],[910,460],[1000,575],[1110,720],[1140,745],[1170,748],[1300,735],[1440,745],[1550,735]].map(a7),
    ...[[0,720],[70,675],[150,620],[230,575],[300,535],[390,520],[450,515],[560,475],[640,458],[790,457],[870,518],[990,598],[1040,632],[1180,640],[1260,685],[1320,700],[1400,670],[1450,580],[1490,430]].map(a8),
    ...[[340,1370],[390,1275],[475,1155],[555,1040],[640,950],[700,928],[820,880],[880,857],[1010,840],[1060,825],[1105,828]].map(a9)
  ];
  const yellowLine = [
    ...[[12,515],[90,490],[170,470],[300,405],[380,370],[430,335],[540,265],[650,195],[800,135],[920,105],[1030,110],[1110,130],[1250,205],[1400,300],[1550,415]].map(a7),
    ...[[0,420],[70,465],[140,490],[240,510],[350,505],[450,495],[580,445],[680,405],[760,365],[840,337],[950,322],[1160,322],[1280,345],[1415,385]].map(a8),
    ...[[205,1405],[270,1428],[340,1432],[470,1412],[600,1362],[690,1320],[760,1270],[870,1180],[980,1070],[1100,925]].map(a9)
  ];
  line('pLines', yellowLine, '#e8e800', 1.8, '5 5');
  line('pLines', cyanLine, '#00e0e0', 1.6, '3 5');
  line('pLines', redLine, '#ff0000', 3.4);

  // price grid and axis
  [12.5, 12, 11.5, 11, 10.5, 10, 9.5, 9, 8.5].forEach(p => {
    const y = 548 - (p - 10) * 162;
    add('pGrid', 'line', { x1: 3, x2: 1711, y1: y, y2: y, stroke: '#c00000', 'stroke-width': 1.5, 'stroke-dasharray': '2 6' });
  });
  for (let p = 12.5; p >= 8.5; p -= 0.25) {
    const y = 548 - (p - 10) * 162;
    add('pAxis', 'line', { x1: 1711, x2: 1720, y1: y, y2: y, stroke: '#b00000', 'stroke-width': 1 });
    add('pAxis', 'text', { x: 1778, y: y + 8, 'text-anchor': 'end' }, p.toFixed(2));
  }

  // volume: positive = down day (cyan fill), negative = up day (hollow red)
  const vols = [
    -22,-30,-34,-39,30,24,-22,-27,25,16,21,-16,13,22,-27,19,-28,-21,30,18,-19,15,-17,-27,25,15,-37,21,30,23,
    33,-19,-21,-18,30,20,-19,23,17,-16,15,15,-19,-21,-15,-21,13,13,21,-25,25,18,-30,15,18,-18,-16,15,-15,-17,
    -27,-24,22,25,-18,23,26,-16,-20,30,-15,18,22,27,-14,22,-24,19,-17,-31,18,21,16,-25,-14,32,-20,-26,-16,18,
    24,-17,21,14,19,26,22,30,18,24,-21,-15,28,22,20,16,18,24,19,
    -18,17,-28,-24,-17,-22,-251,-227,403,-194,167,-132,91,-128,-65,-68,62,47,61,-48,-32,40,-50,32,38,32,-31,-36,32,32,31
  ];
  vols.forEach((v, i) => {
    const h = Math.abs(v), x = X(i) - 3.6;
    if (v > 0) add('vBars', 'rect', { x, y: 1275 - h, width: 7.2, height: h, fill: CYAN });
    else add('vBars', 'rect', { x, y: 1275 - h, width: 7.2, height: h, fill: '#000', stroke: RED, 'stroke-width': 1.5 });
  });

  const z11 = ([x, y]) => [x / 2.178, 1180 + y / 3];
  const z10 = ([x, y]) => [1300 + x / 3, 840 + y / 3];
  const vYellow = [
    ...[[12,188],[60,200],[120,197],[180,205],[250,222],[330,235],[400,230],[450,215],[560,225],[620,230],[680,218],[740,207],[795,200],[830,212],[900,220],[960,220],[1040,232],[1160,240],[1290,232],[1370,218],[1440,232],[1568,238]].map(z11),
    [780,1258],[830,1252],[880,1256],[930,1248],[990,1255],[1040,1250],[1100,1258],[1160,1255],[1220,1252],[1270,1256],
    ...[[0,1250],[80,1248],[130,1240],[170,1246],[205,1240],[240,1100],[270,1000],[300,800],[350,640],[386,560],[460,710],[495,880],[540,970],[590,1040],[630,1075],[665,1118],[700,1130],[750,1155],[790,1168],[830,1170],[860,1185],[940,1190],[1000,1203],[1100,1208]].map(z10)
  ];
  const vPurple = [
    ...[[12,203],[80,195],[150,195],[220,208],[290,210],[330,225],[560,225],[680,220],[800,212],[860,212],[940,217],[1040,230],[1140,232],[1230,238],[1350,225],[1460,230],[1568,232]].map(z11),
    [780,1254],[850,1251],[920,1254],[990,1252],[1060,1253],[1130,1255],[1200,1253],[1270,1255],
    ...[[0,1250],[200,1245],[240,1160],[280,1100],[320,980],[380,900],[440,855],[500,815],[566,785],[640,900],[675,1000],[720,1050],[780,1112],[820,1122],[855,1155],[950,1180],[1030,1195],[1100,1200]].map(z10)
  ];
  line('vLines', vYellow, '#e8e800', 1.8);
  line('vLines', vPurple, '#e000e0', 1.8);

  [30000, 25000, 20000, 15000, 10000, 5000].forEach(v => {
    const y = 1275 - v * 61.2 / 5000;
    add('vGrid', 'line', { x1: 3, x2: 1711, y1: y, y2: y, stroke: '#c00000', 'stroke-width': 1.5, 'stroke-dasharray': '2 6' });
    add('vAxis', 'line', { x1: 1711, x2: 1720, y1: y, y2: y, stroke: '#b00000', 'stroke-width': 1 });
    add('vAxis', 'text', { x: 1778, y: y + 8, 'text-anchor': 'end' }, String(v));
  });

  // quote panel rows
  const quote = (label, price, vol) => `<div class="h-[27px] flex items-center pl-[3px] pr-[4px]">
    <span class="w-[107px] text-[23px] whitespace-nowrap">${label}</span>
    <span class="w-[53px] text-right font-bold text-[20px] tracking-[0.3px] text-[#00e000]">${price}</span>
    <span class="flex-1 text-right font-bold text-[20px] text-[#c8c800]">${vol}<span class="font-normal text-[23px]">万</span></span></div>`;
  document.getElementById('asks').innerHTML = [['卖五 <span class="text-[20px]">￥</span>','11.15','22.7'],['卖四','11.13','49.2'],['卖三','11.12','36.9'],['卖二','11.11','48.2'],['卖一','11.10','21.6']].map(r => quote(...r)).join('');
  document.getElementById('bids').innerHTML = [['买一','11.09','8.8'],['买二','11.08','4.7'],['买三','11.07','12.4'],['买四','11.06','11.5'],['买五','11.05','3.5']].map(r => quote(...r)).join('');

  const num = 'font-bold text-[20px] tracking-[0.3px]';
  const stat = (a, av, ac, b, bv, bc) => `<div class="h-[28.3px] flex items-center pl-[3px] pr-[4px]">
    <span class="w-[160px] flex items-center justify-between"><span class="text-[23px] whitespace-nowrap">${a}</span><span class="${num} ${ac}">${av}</span></span>
    <span class="ml-[8px] flex-1 flex items-center justify-between"><span class="text-[23px] whitespace-nowrap">${b}</span><span class="${num} ${bc}">${bv}</span></span></div>`;
  const E = '<span class="font-normal text-[23px] tracking-normal">亿</span>';
  document.getElementById('stats').innerHTML = [
    ['今开','11.23','text-[#ff3232]','均价','11.09','text-[#00e000]'],
    ['最高','11.28','text-[#ff3232]','量比','0.95','text-[#00e000]'],
    ['最低','11.00','text-[#00e000]','市值','14.8' + E,'text-[#c0c0c0]'],
    ['现量','196','text-white','总量','24487','text-[#c0c0c0]'],
    ['外盘','10523','text-[#ff3232]','内盘','13964','text-[#00e000]']
  ].map(r => stat(...r)).join('');
  document.getElementById('stats2').innerHTML = [
    ['换手','1.83%','text-[#c0c0c0]','股本','1.34' + E,'text-[#c0c0c0]'],
    ['净资','1.66','text-[#c0c0c0]','流通','1.34' + E,'text-[#c0c0c0]'],
    ['收益<span class="text-[15px]">(三)</span>','0.003','text-[#c0c0c0]','<span class="text-[20px]">PE(动)</span>','3029.8','text-[#c0c0c0]']
  ].map(r => stat(...r)).join('');

  const trades = [
    ['14:54','11.08','1.0','B',1],['14:55','11.09','3.9','B',22],['14:55','11.08','0.4','',2],['14:55','11.08','0.1','B',1],
    ['14:55','11.09','2.0','B',5],['14:55','11.09','1.0','B',3],['14:55','11.10','1.6','B',5],['14:55','11.10','0.4','B',1],
    ['14:55','11.10','0.3','B',1],['14:55','11.10','0.2','B',2],['14:55','11.10','1.8','B',2],['14:55','11.10','1.2','B',3],
    ['14:56','11.10','0.7','B',1],['14:56','11.10','0.2','B',1],['14:56','11.10','1.3','B',3],['14:56','11.10','2.6','B',7],
    ['14:56','11.10','0.6','B',1],['14:56','11.09','1.0','S',1],['14:56','11.10','1.8','B',3],['14:56','11.10','1.3','B',1],
    ['15:00','11.10','21.8','',24]
  ];
  document.getElementById('trades').innerHTML = trades.map(([t, p, v, s, n]) => `<div class="h-[27px] flex items-center pl-[3px] pr-[4px]">
    <span class="w-[103px] tracking-[0.2px]">${t}</span>
    <span class="w-[145px] flex items-center justify-between"><span class="tracking-[0.3px] text-[#00e000]">${p}</span><span class="text-[#c8c800]">${v}<span class="font-normal text-[23px]">万</span></span></span>
    <span class="ml-[18px] w-[20px] text-[21px] font-normal ${s === 'S' ? 'text-[#00e000]' : 'text-[#ff3232]'}">${s}</span>
    <span class="flex-1 text-right text-[#a8a8a8]">${n}</span></div>`).join('');
</script>
</body>
</html>
